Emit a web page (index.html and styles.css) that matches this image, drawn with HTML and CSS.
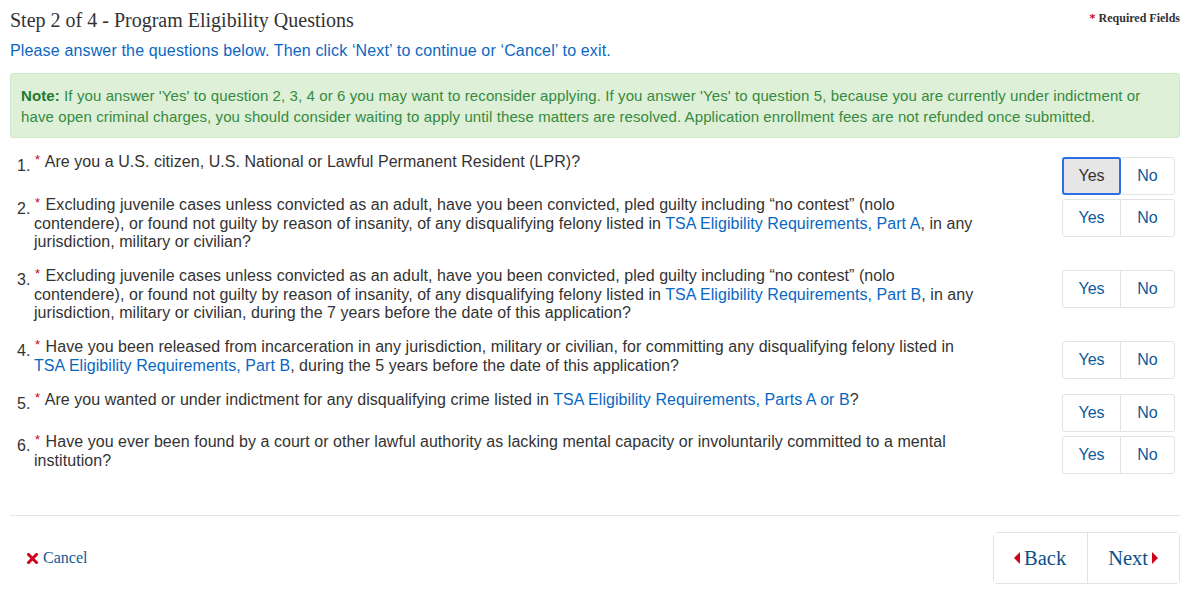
FILE: index.html
```html
<!DOCTYPE html>
<html lang="en">
<head>
  <meta charset="UTF-8" />
  <title>Program Eligibility Questions</title>
  <link rel="stylesheet" href="styles.css">
</head>
<body>
  <div class="page">
    <div class="title-row">
      <h1>Step 2 of 4 - Program Eligibility Questions</h1>
      <span class="req"><span class="star">*</span> Required Fields</span>
    </div>
    <p class="intro">Please answer the questions below. Then click &lsquo;Next&rsquo; to continue or &lsquo;Cancel&rsquo; to exit.</p>

    <div class="note">
      <b>Note:</b> If you answer 'Yes' to question 2, 3, 4 or 6 you may want to reconsider applying. If you answer 'Yes' to question 5, because you are currently under indictment or have open criminal charges, you should consider waiting to apply until these matters are resolved. Application enrollment fees are not refunded once submitted.
    </div>

    <ol class="questions">
      <li class="question">
        <span class="num">1.</span>
        <div class="q-text"><span class="star">*</span> Are you a U.S. citizen, U.S. National or Lawful Permanent Resident (LPR)?</div>
        <div class="yn"><button class="yes active">Yes</button><button class="no">No</button></div>
      </li>
      <li class="question">
        <span class="num">2.</span>
        <div class="q-text"><span class="star">*</span> Excluding juvenile cases unless convicted as an adult, have you been convicted, pled guilty including &ldquo;no contest&rdquo; (nolo contendere), or found not guilty by reason of insanity, of any disqualifying felony listed in <a href="#">TSA Eligibility Requirements, Part A</a>, in any jurisdiction, military or civilian?</div>
        <div class="yn"><button class="yes">Yes</button><button class="no">No</button></div>
      </li>
      <li class="question">
        <span class="num">3.</span>
        <div class="q-text"><span class="star">*</span> Excluding juvenile cases unless convicted as an adult, have you been convicted, pled guilty including &ldquo;no contest&rdquo; (nolo contendere), or found not guilty by reason of insanity, of any disqualifying felony listed in <a href="#">TSA Eligibility Requirements, Part B</a>, in any jurisdiction, military or civilian, during the 7 years before the date of this application?</div>
        <div class="yn"><button class="yes">Yes</button><button class="no">No</button></div>
      </li>
      <li class="question">
        <span class="num">4.</span>
        <div class="q-text"><span class="star">*</span> Have you been released from incarceration in any jurisdiction, military or civilian, for committing any disqualifying felony listed in <a href="#">TSA Eligibility Requirements, Part B</a>, during the 5 years before the date of this application?</div>
        <div class="yn"><button class="yes">Yes</button><button class="no">No</button></div>
      </li>
      <li class="question">
        <span class="num">5.</span>
        <div class="q-text"><span class="star">*</span> Are you wanted or under indictment for any disqualifying crime listed in <a href="#">TSA Eligibility Requirements, Parts A or B</a>?</div>
        <div class="yn"><button class="yes">Yes</button><button class="no">No</button></div>
      </li>
      <li class="question">
        <span class="num">6.</span>
        <div class="q-text"><span class="star">*</span> Have you ever been found by a court or other lawful authority as lacking mental capacity or involuntarily committed to a mental institution?</div>
        <div class="yn"><button class="yes">Yes</button><button class="no">No</button></div>
      </li>
    </ol>

    <hr class="divider">

    <div class="footer-row">
      <a href="#" class="cancel">
        <svg width="11" height="11" viewBox="0 0 11 11"><path d="M1.5 1.5 L9.5 9.5 M9.5 1.5 L1.5 9.5" stroke="#d0021b" stroke-width="3" stroke-linecap="square"/></svg>
        Cancel
      </a>
      <div class="nav">
        <button class="nav-btn"><svg width="6" height="12" viewBox="0 0 6 12"><path d="M6 0 L0 6 L6 12 Z" fill="#d0021b"/></svg>Back</button>
        <button class="nav-btn">Next<svg width="6" height="12" viewBox="0 0 6 12"><path d="M0 0 L6 6 L0 12 Z" fill="#d0021b"/></svg></button>
      </div>
    </div>
  </div>
</body>
</html>
```

FILE: styles.css
```css
body {
  margin: 0;
  background: #fff;
  color: #333;
  font-family: "Liberation Sans", Arial, sans-serif;
  font-size: 16px;
}
.page {
  padding: 0 12px 0 10px;
}
.title-row {
  display: flex;
  align-items: center;
  justify-content: space-between;
  padding-top: 8px;
}
h1 {
  margin: 0;
  font-family: "Liberation Serif", "Times New Roman", serif;
  font-weight: normal;
  font-size: 20px;
  line-height: 24px;
  color: #333;
}
.req {
  font-family: "Liberation Serif", "Times New Roman", serif;
  font-weight: bold;
  font-size: 12px;
  color: #333;
  margin-top: -4px;
}
.star {
  color: #d0021b;
}
.intro {
  margin: 9px 0 0;
  line-height: 20px;
  letter-spacing: 0.15px;
  color: #0b67c2;
}
.note {
  margin-top: 12px;
  background: #dff0d8;
  border: 1px solid #d0e9c6;
  border-radius: 3px;
  color: #358a3f;
  font-size: 15px;
  line-height: 21px;
  letter-spacing: 0.1px;
  padding: 11px 10px 10px;
}
.note b {
  color: #237a30;
}
.questions {
  list-style: none;
  margin: 15px 0 0;
  padding: 0;
}
.question {
  display: flex;
  align-items: flex-start;
  line-height: 18px;
}
.num {
  width: 24px;
  padding: 4px 0 0 7px;
  box-sizing: border-box;
  flex: none;
}
.q-text {
  width: 945px;
  margin-bottom: 16px;
  letter-spacing: 0.05px;
}
.q-text .star {
  font-size: 13px;
  position: relative;
  top: -3px;
  margin-left: 1px;
  margin-right: 1px;
}
.q-text a {
  color: #0b67c2;
  text-decoration: none;
}
.yn {
  margin: 3px 5px 1px auto;
  display: flex;
}
.question:first-child .yn {
  margin: 4px 5px 1px auto;
}
.yn button {
  height: 38px;
  background: #fff;
  border: 1px solid #e3e3e3;
  font-family: "Liberation Sans", Arial, sans-serif;
  font-size: 16px;
  color: #0d5a9a;
  padding: 0;
}
.yn .yes {
  width: 59px;
  border-radius: 3px 0 0 3px;
}
.yn .no {
  width: 55px;
  margin-left: -1px;
  border-radius: 0 3px 3px 0;
}
.yn .active {
  background: #e6e6e6;
  color: #333;
  border: 2px solid #2d6ee8;
  border-radius: 3px;
  position: relative;
  z-index: 1;
}
.divider {
  border: 0;
  border-top: 1px solid #e5e5e5;
  margin: 29px 0 0;
}
.footer-row {
  display: flex;
  align-items: center;
  justify-content: space-between;
  padding-top: 16px;
}
.cancel {
  display: flex;
  align-items: center;
  gap: 5px;
  margin-left: 17px;
  font-family: "Liberation Serif", "Times New Roman", serif;
  font-size: 16px;
  color: #0b5a99;
  text-decoration: none;
}
.nav {
  display: flex;
  border: 1px solid #e3e3e3;
  border-radius: 4px;
}
.nav-btn {
  display: flex;
  align-items: center;
  gap: 4px;
  height: 50px;
  background: #fff;
  border: 0;
  font-family: "Liberation Serif", "Times New Roman", serif;
  font-size: 20.5px;
  color: #0b4f8a;
  padding: 0 21px 0 20px;
}
.nav-btn + .nav-btn {
  border-left: 1px solid #e3e3e3;
}
```
